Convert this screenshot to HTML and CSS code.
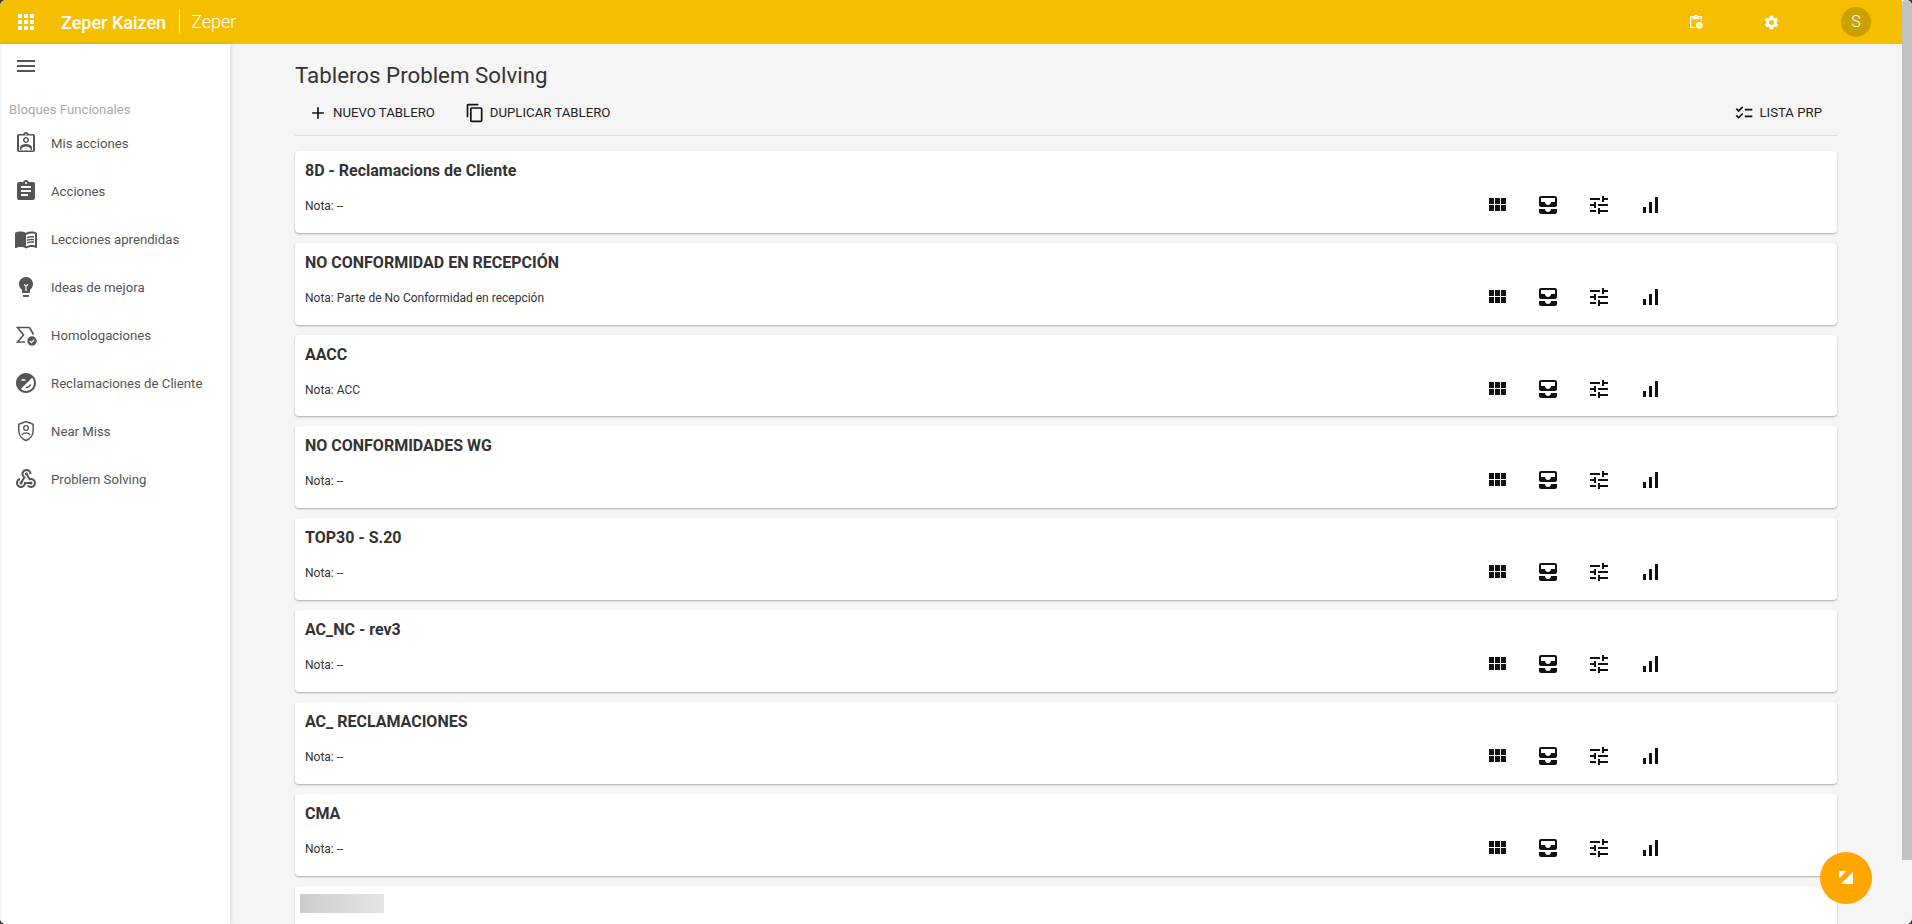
FILE: index.html
```html
<!DOCTYPE html>
<html lang="en">
<head>
    <meta charset="UTF-8">
    <title>Zeper Kaizen</title>
    <link rel="stylesheet" href="styles.css">
</head>
<body>
    <svg class="icon-defs" width="0" height="0">
        <symbol id="i-grid" viewBox="0 0 24 24"><path d="M4 11h5V5H4v6zm0 7h5v-6H4v6zm6 0h5v-6h-5v6zm6 0h5v-6h-5v6zm-6-7h5V5h-5v6zm6-6v6h5V5h-5z"/></symbol>
        <symbol id="i-inbox" viewBox="0 0 24 24"><path d="M19 3H5c-1.100 0-2 .9-2 2v7c0 1.100.9 2 2 2h14c1.100 0 2-.9 2-2V5c0-1.100-.9-2-2-2zm0 6h-4c0 1.620-1.380 3-3 3s-3-1.380-3-3H5V5h14v4zm-4 7h6v3c0 1.100-.9 2-2 2H5c-1.100 0-2-.9-2-2v-3h6c0 1.660 1.340 3 3 3s3-1.340 3-3z"/></symbol>
        <symbol id="i-tune" viewBox="0 0 24 24"><path d="M3 17v2h6v-2H3zM3 5v2h10V5H3zm10 16v-2h8v-2h-8v-2h-2v6h2zM7 9v2H3v2h4v2h2V9H7zm14 4v-2H11v2h10zm-6-4h2V7h4V5h-4V3h-2v6z"/></symbol>
        <symbol id="i-signal" viewBox="0 0 24 24"><path d="M17 4h3v16h-3V4zM5 14h3v6H5v-6zm6-5h3v11h-3V9z"/></symbol>
    </svg>

    <div class="window">
        <div class="app">
            <header class="topbar">
                <svg class="top-apps" viewBox="0 0 24 24"><path d="M4 8h4V4H4v4zm6 12h4v-4h-4v4zm-6 0h4v-4H4v4zm0-6h4v-4H4v4zm6 0h4v-4h-4v4zm6-10v4h4V4h-4zm-6 4h4V4h-4v4zm6 6h4v-4h-4v4zm0 6h4v-4h-4v4z"/></svg>
                <span class="brand">Zeper Kaizen</span>
                <span class="brand-sub">Zeper</span>
                <div class="top-actions">
                    <svg class="top-icon" viewBox="0 0 24 24"><path d="M19 3h-4.180C14.400 1.840 13.300 1 12 1s-2.400.84-2.820 2H5c-1.100 0-2 .9-2 2v14c0 1.100.9 2 2 2h6.500c-.4-.6-.7-1.300-.9-2H5V5h2v3h10V5h2v5.600c.7.100 1.400.4 2 .8V5c0-1.100-.9-2-2-2zm-7 2c-.55 0-1-.45-1-1s.45-1 1-1 1 .45 1 1-.45 1-1 1z"/><circle cx="17" cy="17" r="5"/><path d="M14.500 14.500l5 5" stroke="#f5bf00" stroke-width="1.200"/></svg>
                    <svg class="top-icon gear" viewBox="0 0 24 24"><path d="M19.140 12.940c.04-.3.060-.61.060-.94 0-.32-.02-.64-.07-.94l2.030-1.580c.18-.14.23-.41.120-.61l-1.920-3.320c-.12-.22-.37-.29-.59-.22l-2.390.96c-.5-.38-1.030-.7-1.620-.94l-.36-2.540c-.04-.24-.24-.41-.48-.41h-3.840c-.24 0-.43.17-.47.41l-.36 2.540c-.59.24-1.130.57-1.620.94l-2.390-.96c-.22-.08-.47 0-.59.22L2.740 8.870c-.12.21-.08.47.12.61l2.030 1.580c-.05.3-.09.63-.09.94s.02.64.07.94l-2.030 1.580c-.18.14-.23.41-.12.61l1.920 3.320c.12.22.37.29.59.22l2.390-.96c.5.38 1.030.7 1.620.94l.36 2.540c.05.24.24.41.48.41h3.840c.24 0 .44-.17.47-.41l.36-2.540c.59-.24 1.130-.56 1.620-.94l2.390.96c.22.080.47 0 .59-.22l1.920-3.320c.12-.22.070-.47-.12-.61l-2.010-1.580zM12 15.600c-1.980 0-3.600-1.620-3.600-3.600s1.620-3.600 3.600-3.600 3.600 1.620 3.600 3.600-1.620 3.600-3.600 3.600z"/></svg>
                    <span class="avatar">S</span>
                </div>
            </header>

            <div class="layout">
                <nav class="sidebar">
                    <svg class="menu-icon" viewBox="0 0 24 24"><path d="M3 18h18v-2H3v2zm0-5h18v-2H3v2zm0-7v2h18V6H3z"/></svg>
                    <div class="side-title">Bloques Funcionales</div>
                    <a class="side-item">
                        <svg viewBox="0 0 24 24"><path d="M19 3h-4.180C14.400 1.840 13.300 1 12 1c-1.300 0-2.400.84-2.820 2H5c-1.100 0-2 .9-2 2v14c0 1.100.9 2 2 2h14c1.100 0 2-.9 2-2V5c0-1.100-.9-2-2-2zm-7-.25c.41 0 .75.34.75.75s-.34.75-.75.75-.75-.34-.75-.75.34-.75.75-.75zM19 19.500H5V4.500h14v15zm-7-7.500c1.650 0 3-1.350 3-3s-1.350-3-3-3-3 1.350-3 3 1.350 3 3 3zm0-4.500c.8 0 1.500.7 1.500 1.500s-.7 1.500-1.500 1.500-1.500-.7-1.500-1.500.7-1.500 1.500-1.500zm6 11.500v-2.530c0-2.500-3.970-3.580-6-3.580s-6 1.070-6 3.580V19h1.500v-1.800c.69-.86 2.880-1.800 4.500-1.800s3.810.94 4.500 1.800V19H18z"/></svg>
                        Mis acciones
                    </a>
                    <a class="side-item">
                        <svg viewBox="0 0 24 24"><path d="M19 3h-4.180C14.400 1.840 13.300 1 12 1c-1.300 0-2.400.84-2.820 2H5c-1.100 0-2 .9-2 2v14c0 1.100.9 2 2 2h14c1.100 0 2-.9 2-2V5c0-1.100-.9-2-2-2zm-7 0c.55 0 1 .45 1 1s-.45 1-1 1-1-.45-1-1 .45-1 1-1zm2 14H7v-2h7v2zm3-4H7v-2h10v2zm0-4H7V7h10v2z"/></svg>
                        Acciones
                    </a>
                    <a class="side-item">
                        <svg viewBox="0 0 24 24"><path d="M21 5c-1.110-.35-2.330-.5-3.500-.5-1.950 0-4.050.4-5.500 1.500-1.450-1.100-3.550-1.500-5.500-1.500S2.450 4.900 1 6v14.650c0 .25.25.5.5.5.1 0 .15-.05.25-.05C3.100 20.450 5.050 20 6.500 20c1.950 0 4.050.4 5.500 1.500 1.350-.85 3.800-1.500 5.500-1.500 1.650 0 3.350.3 4.750 1.050.1.05.15.05.25.05.25 0 .5-.25.5-.5V6c-.6-.45-1.250-.75-2-1zm0 13.500c-1.100-.35-2.300-.5-3.500-.5-1.700 0-4.150.65-5.500 1.500V8c1.350-.85 3.800-1.500 5.500-1.500 1.200 0 2.400.15 3.500.5v11.500z"/><path d="M17.500 10.500c.88 0 1.730.09 2.500.26V9.240c-.79-.15-1.640-.24-2.500-.24-1.700 0-3.240.29-4.500.83v1.660c1.130-.64 2.700-.99 4.500-.99zM13 12.490v1.660c1.130-.64 2.700-.99 4.500-.99.88 0 1.730.09 2.500.26V11.900c-.79-.15-1.640-.24-2.500-.24-1.700 0-3.240.3-4.500.83zM17.500 14.330c-1.700 0-3.240.29-4.500.83v1.660c1.130-.64 2.700-.99 4.500-.99.88 0 1.730.09 2.500.26v-1.520c-.79-.16-1.640-.24-2.500-.24z"/></svg>
                        Lecciones aprendidas
                    </a>
                    <a class="side-item">
                        <svg viewBox="0 0 24 24"><path d="M9 21c0 .55.45 1 1 1h4c.55 0 1-.45 1-1v-1H9v1zm3-19C8.140 2 5 5.140 5 9c0 2.380 1.190 4.470 3 5.740V17c0 .55.45 1 1 1h6c.55 0 1-.45 1-1v-2.260c1.810-1.270 3-3.360 3-5.740 0-3.860-3.140-7-7-7z"/><path d="M10 9.500l2 1.500 2-1.500M12 11v5" fill="none" stroke="#fff" stroke-width="1.200"/></svg>
                        Ideas de mejora
                    </a>
                    <a class="side-item">
                        <svg viewBox="0 0 24 24"><path d="M15.500 4.500H3.500l6 7.500-6 7h7.500M15.500 4.500l4 7" fill="none" stroke="#555" stroke-width="1.600"/><circle cx="18" cy="18" r="4.700"/><path d="M15.800 18l1.600 1.600 2.900-3" fill="none" stroke="#fff" stroke-width="1.200"/></svg>
                        Homologaciones
                    </a>
                    <a class="side-item">
                        <svg viewBox="0 0 24 24"><path d="M12 2C6.480 2 2 6.480 2 12s4.480 10 10 10 10-4.480 10-10S17.520 2 12 2zm0 18c-2 0-3.800-.7-5.200-1.900L18.100 6.800C19.300 8.200 20 10 20 12c0 4.420-3.580 8-8 8z"/><path d="M7.500 9h4" stroke="#fff" stroke-width="1.500"/><path d="M12 16.500c2 0 3.700-1 4.500-3" fill="none" stroke="#555" stroke-width="1.500"/></svg>
                        Reclamaciones de Cliente
                    </a>
                    <a class="side-item">
                        <svg viewBox="0 0 24 24"><path d="M12 2.500L4.800 5.200v6c0 4.700 3 8.900 7.200 10.300 4.200-1.400 7.200-5.600 7.200-10.300v-6L12 2.500z" fill="none" stroke="#555" stroke-width="1.500"/><circle cx="12" cy="9" r="2.300" fill="none" stroke="#555" stroke-width="1.300"/><path d="M7.800 15.800c1-1.300 2.500-2 4.200-2s3.200.7 4.200 2" fill="none" stroke="#555" stroke-width="1.300"/></svg>
                        Near Miss
                    </a>
                    <a class="side-item">
                        <svg viewBox="0 0 24 24"><path d="M10 15h5.880c.27-.31.67-.5 1.120-.5.83 0 1.500.67 1.500 1.500s-.67 1.500-1.500 1.500c-.44 0-.84-.19-1.120-.5H11.900c-.46 2.280-2.480 4-4.900 4-2.760 0-5-2.240-5-5 0-2.420 1.720-4.440 4-4.900v2.070c-1.160.41-2 1.530-2 2.830 0 1.650 1.350 3 3 3s3-1.350 3-3v-1zm2.500-11c1.650 0 3 1.350 3 3h2c0-2.760-2.240-5-5-5s-5 2.240-5 5c0 1.430.6 2.710 1.550 3.620l-2.350 3.900c-.68.14-1.200.75-1.200 1.480 0 .83.67 1.500 1.500 1.500s1.500-.67 1.500-1.500c0-.16-.02-.31-.07-.45l3.380-5.630C10.490 9.610 9.500 8.420 9.500 7c0-1.650 1.350-3 3-3zm4.500 9c-.64 0-1.230.2-1.720.54l-3.050-5.070C11.530 8.350 11 7.740 11 7c0-.83.67-1.500 1.500-1.500S14 6.170 14 7c0 .15-.02.29-.06.43l2.190 3.650c.28-.05.57-.08.87-.08 2.760 0 5 2.240 5 5s-2.240 5-5 5c-1.850 0-3.470-1.010-4.330-2.500h2.670c.48.32 1.050.5 1.660.5 1.650 0 3-1.350 3-3s-1.350-3-3-3z"/></svg>
                        Problem Solving
                    </a>
                </nav>

                <main class="content">
                    <h1 class="page-title">Tableros Problem Solving</h1>
                    <div class="toolbar">
                        <button class="tool-btn">
                            <svg viewBox="0 0 24 24"><path d="M19 13h-6v6h-2v-6H5v-2h6V5h2v6h6v2z"/></svg>
                            NUEVO TABLERO
                        </button>
                        <button class="tool-btn">
                            <svg viewBox="0 0 24 24"><path d="M16 1H4c-1.100 0-2 .9-2 2v14h2V3h12V1zm3 4H8c-1.100 0-2 .9-2 2v14c0 1.100.9 2 2 2h11c1.100 0 2-.9 2-2V7c0-1.100-.9-2-2-2zm0 16H8V7h11v14z"/></svg>
                            DUPLICAR TABLERO
                        </button>
                        <button class="tool-btn tool-right">
                            <svg viewBox="0 0 24 24"><path d="M22 7h-9v2h9V7zm0 8h-9v2h9v-2zM5.540 11 2 7.460l1.410-1.410 2.120 2.120 4.240-4.240 1.410 1.410L5.540 11zm0 8L2 15.460l1.410-1.410 2.120 2.120 4.240-4.240 1.410 1.410L5.540 19z"/></svg>
                            LISTA PRP
                        </button>
                    </div>

                    <div class="board-list">
                        <section class="board">
                            <div class="board-text">
                                <h2>8D - Reclamacions de Cliente</h2>
                                <p>Nota: --</p>
                            </div>
                            <div class="board-icons">
                                <svg><use href="#i-grid"/></svg><svg><use href="#i-inbox"/></svg><svg><use href="#i-tune"/></svg><svg><use href="#i-signal"/></svg>
                            </div>
                        </section>
                        <section class="board">
                            <div class="board-text">
                                <h2>NO CONFORMIDAD EN RECEPCIÓN</h2>
                                <p>Nota: Parte de No Conformidad en recepción</p>
                            </div>
                            <div class="board-icons">
                                <svg><use href="#i-grid"/></svg><svg><use href="#i-inbox"/></svg><svg><use href="#i-tune"/></svg><svg><use href="#i-signal"/></svg>
                            </div>
                        </section>
                        <section class="board">
                            <div class="board-text">
                                <h2>AACC</h2>
                                <p>Nota: ACC</p>
                            </div>
                            <div class="board-icons">
                                <svg><use href="#i-grid"/></svg><svg><use href="#i-inbox"/></svg><svg><use href="#i-tune"/></svg><svg><use href="#i-signal"/></svg>
                            </div>
                        </section>
                        <section class="board">
                            <div class="board-text">
                                <h2>NO CONFORMIDADES WG</h2>
                                <p>Nota: --</p>
                            </div>
                            <div class="board-icons">
                                <svg><use href="#i-grid"/></svg><svg><use href="#i-inbox"/></svg><svg><use href="#i-tune"/></svg><svg><use href="#i-signal"/></svg>
                            </div>
                        </section>
                        <section class="board">
                            <div class="board-text">
                                <h2>TOP30 - S.20</h2>
                                <p>Nota: --</p>
                            </div>
                            <div class="board-icons">
                                <svg><use href="#i-grid"/></svg><svg><use href="#i-inbox"/></svg><svg><use href="#i-tune"/></svg><svg><use href="#i-signal"/></svg>
                            </div>
                        </section>
                        <section class="board">
                            <div class="board-text">
                                <h2>AC_NC - rev3</h2>
                                <p>Nota: --</p>
                            </div>
                            <div class="board-icons">
                                <svg><use href="#i-grid"/></svg><svg><use href="#i-inbox"/></svg><svg><use href="#i-tune"/></svg><svg><use href="#i-signal"/></svg>
                            </div>
                        </section>
                        <section class="board">
                            <div class="board-text">
                                <h2>AC_ RECLAMACIONES</h2>
                                <p>Nota: --</p>
                            </div>
                            <div class="board-icons">
                                <svg><use href="#i-grid"/></svg><svg><use href="#i-inbox"/></svg><svg><use href="#i-tune"/></svg><svg><use href="#i-signal"/></svg>
                            </div>
                        </section>
                        <section class="board">
                            <div class="board-text">
                                <h2>CMA</h2>
                                <p>Nota: --</p>
                            </div>
                            <div class="board-icons">
                                <svg><use href="#i-grid"/></svg><svg><use href="#i-inbox"/></svg><svg><use href="#i-tune"/></svg><svg><use href="#i-signal"/></svg>
                            </div>
                        </section>
                        <section class="board board-loading">
                            <div class="skeleton"></div>
                        </section>
                    </div>
                </main>
            </div>
        </div>

        <div class="scrollbar"><div class="scroll-thumb"></div></div>

        <button class="fab">
            <svg viewBox="0 0 16 16"><path d="M1 1h7.500L1 8.500V1z"/><path d="M15 2v12H3L15 2z"/></svg>
        </button>
    </div>
</body>
</html>
```

FILE: styles.css
```css
* {
    box-sizing: border-box;
}

html, body {
    margin: 0;
    height: 100%;
    overflow: hidden;
}

body {
    background: #3a3a3a;
    font-family: 'Roboto', sans-serif;
    color: #333;
}

.icon-defs {
    display: block;
    height: 0;
}

.window {
    position: relative;
    display: flex;
    height: 924px;
    overflow: hidden;
    border-radius: 6px;
    background: #f5f5f5;
}

.app {
    flex: 1;
    min-width: 0;
    display: flex;
    flex-direction: column;
}

/* top bar */
.topbar {
    height: 44px;
    flex-shrink: 0;
    display: flex;
    align-items: center;
    background: #f5bf00;
    color: #fff;
}

.top-apps {
    width: 24px;
    height: 24px;
    margin-left: 14px;
    fill: #fff;
}

.brand {
    margin-left: 23px;
    font-size: 18px;
    font-weight: 500;
}

.brand-sub {
    margin-left: 13px;
    padding-left: 11px;
    border-left: 1px solid #fff;
    font-size: 18px;
    font-weight: 300;
    line-height: 24px;
}

.top-actions {
    margin-left: auto;
    display: flex;
    align-items: center;
    margin-right: 31px;
}

.top-icon {
    width: 16px;
    height: 16px;
    fill: #fff;
}

.gear {
    width: 17px;
    height: 17px;
    margin-left: 59px;
}

.avatar {
    width: 30px;
    height: 30px;
    margin-left: 61px;
    border-radius: 50%;
    background: #cca000;
    font-size: 16px;
    font-weight: 300;
    line-height: 30px;
    text-align: center;
}

/* sidebar */
.layout {
    flex: 1;
    min-height: 0;
    display: flex;
}

.sidebar {
    width: 230px;
    flex-shrink: 0;
    background: #fff;
    border-left: 1px solid #f0f0f0;
    box-shadow: 0 0 4px rgba(0, 0, 0, 0.2);
    padding-top: 10px;
    color: #555;
}

.menu-icon {
    display: block;
    width: 24px;
    height: 24px;
    margin-left: 13px;
    fill: #555;
}

.side-title {
    margin: 24px 0 1px 8px;
    font-size: 13.200px;
    line-height: 16px;
    color: #aaa;
}

.side-item {
    display: flex;
    align-items: center;
    height: 48px;
    padding-left: 13px;
    font-size: 13.200px;
}

.side-item svg {
    width: 24px;
    height: 24px;
    margin-right: 13px;
    fill: #555;
}

/* main content */
.content {
    flex: 1;
    min-width: 0;
    padding: 16px 65px 0 65px;
}

.page-title {
    margin: 0;
    font-size: 22.300px;
    font-weight: 400;
    line-height: 30px;
    color: #333;
}

.toolbar {
    display: flex;
    align-items: center;
    height: 40px;
    margin-top: 6px;
    padding-bottom: 6px;
    border-bottom: 1px solid #ddd;
}

.tool-btn {
    display: flex;
    align-items: center;
    margin-left: 13px;
    margin-right: 17px;
    padding: 0;
    border: none;
    background: none;
    font-family: inherit;
    font-size: 13.200px;
    color: #222;
}

.tool-btn svg {
    width: 20px;
    height: 20px;
    margin-right: 5px;
    fill: #111;
}

.tool-right {
    margin-left: auto;
    margin-right: 15px;
}

.board-list {
    margin-top: 15px;
    display: flex;
    flex-direction: column;
    gap: 10px;
}

.board {
    display: flex;
    height: 81.820px;
    flex-shrink: 0;
    padding: 0 10px;
    background: #fff;
    border-radius: 4px;
    box-shadow: 0 1px 2px rgba(0, 0, 0, 0.3);
}

.board-text {
    flex: 1;
    min-width: 0;
}

.board h2 {
    margin: 10px 0 0;
    font-size: 16px;
    font-weight: 700;
    line-height: 20px;
    color: #333;
}

.board p {
    margin: 17px 0 0;
    font-size: 12px;
    line-height: 16px;
    color: #333;
}

.board-icons {
    display: flex;
    gap: 27px;
    margin: 42px 165px 0 0;
}

.board-icons svg {
    width: 24px;
    height: 24px;
    fill: #111;
}

.board-loading {
    padding: 8px 5px;
}

.skeleton {
    width: 84px;
    height: 19px;
    background: linear-gradient(90deg, #ccc, #e5e5e5);
}

/* scrollbar */
.scrollbar {
    width: 10px;
    flex-shrink: 0;
    background: #f5f5f5;
}

.scroll-thumb {
    height: 860px;
    background: #c1c1c1;
    border-top-left-radius: 4px;
}

.fab {
    position: absolute;
    left: 1820px;
    top: 852px;
    width: 52px;
    height: 52px;
    padding: 0;
    display: flex;
    align-items: center;
    justify-content: center;
    border: none;
    border-radius: 50%;
    background: #ffa600;
}

.fab svg {
    width: 16px;
    height: 16px;
    fill: #fff;
}
```
